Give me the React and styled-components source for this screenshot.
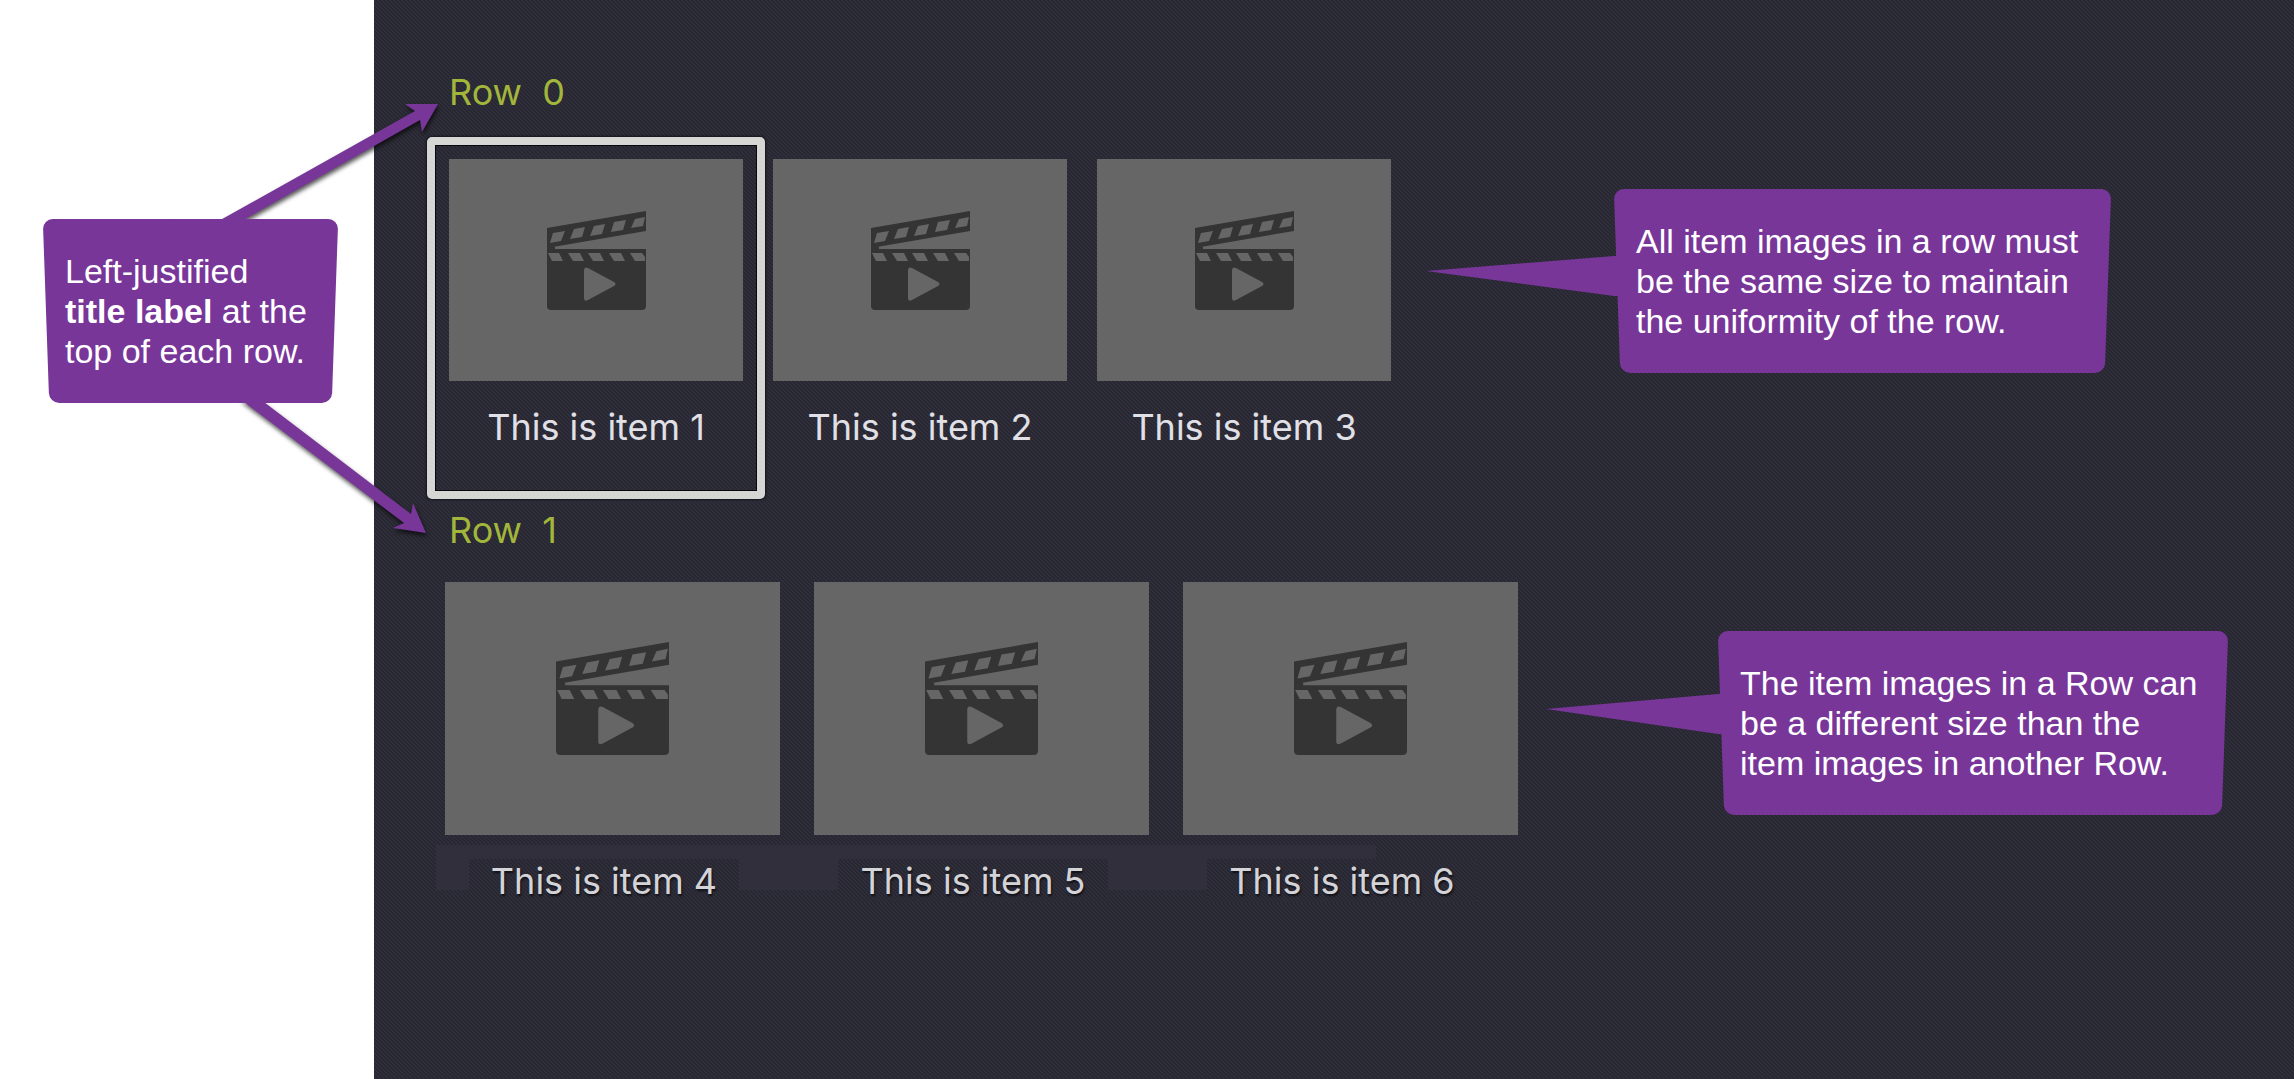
import React from "react";
import styled, { createGlobalStyle, css } from "styled-components";

const rows = [
  {
    title: "Row  0",
    items: ["This is item 1", "This is item 2", "This is item 3"],
    focused: 0,
    size: { width: 294, height: 222, icon: 99, gap: 30 },
    titleGap: 45,
    indent: 4,
    note: {
      text: "All item images in a row must\nbe the same size to maintain\nthe uniformity of the row.",
      width: 497,
      tail: 188,
      tailTop: 67,
      top: 30,
      left: 35,
    },
  },
  {
    title: "Row  1",
    items: ["This is item 4", "This is item 5", "This is item 6"],
    size: { width: 335, height: 253, icon: 113, gap: 34 },
    titleGap: 30,
    indent: 0,
    patched: true,
    note: {
      text: "The item images in a Row can\nbe a different size than the\nitem images in another Row.",
      width: 510,
      tail: 172,
      tailTop: 63,
      top: 49,
      left: 28,
    },
  },
];

const Clapper = ({ size }) => (
  <svg width={size} height={size} viewBox="0 0 99 99" aria-hidden="true">
    <path fill="#343434" d="M0 17 L99 0 V20 L0 37 Z" />
    <path fill="#343434" d="M0 34 L8 36 V40 H0 Z" />
    <path fill="#343434" d="M0 38 H99 V95 Q99 99 95 99 H4 Q0 99 0 95 Z" />
    <g fill="#666">
      <path d="M6 22 L18 20 L14 30 L3 32 Z" />
      <path d="M27 18 L38 16 L35 26 L23 28 Z" />
      <path d="M47 15 L58 13 L55 23 L43 25 Z" />
      <path d="M67 11 L79 9 L76 19 L64 21 Z" />
      <path d="M88 8 L98 6 L96 15 L84 17 Z" />
      <path d="M1 42 H12 L16 50 H5 Z" />
      <path d="M21 42 H33 L37 50 H26 Z" />
      <path d="M41 42 H53 L57 50 H46 Z" />
      <path d="M62 42 H74 L78 50 H67 Z" />
      <path d="M83 42 H95 L98 46 V50 H88 Z" />
      <path d="M37 60 Q37 55 41 57 L67 71 Q70 73 67 75 L41 89 Q37 91 37 87 Z" />
    </g>
  </svg>
);

const Callout = ({ width, children }) => (
  <Bubble $width={width}>
    <p>{children}</p>
  </Bubble>
);

const Row = ({ title, items, focused, size, titleGap, indent, patched, note }) => (
  <section>
    <RowTitle $gap={titleGap}>{title}</RowTitle>
    <Track $indent={indent}>
      <Items $gap={size.gap} $patched={patched}>
        {items.map((item, index) => (
          <Item key={item} $width={size.width}>
            <Poster $height={size.height}>
              <Clapper size={size.icon} />
            </Poster>
            <Caption $patched={patched}>{item}</Caption>
            {index === focused && <FocusFrame />}
          </Item>
        ))}
      </Items>
      <Note $top={note.top} $left={note.left}>
        <Tail $top={note.tailTop} width={note.tail} height="40" aria-hidden="true">
          <path d={`M0 15 L${note.tail} 0 h8 V40 h-8 Z`} />
        </Tail>
        <Callout width={note.width}>{note.text}</Callout>
      </Note>
    </Track>
  </section>
);

const App = () => {
  return (
    <>
      <GlobalStyle />
      <Page>
        <Aside>
          <Arrows width="374" height="600" aria-hidden="true">
            <path d="M215 223 L415 111 L405 104 H438 L422 132 L420 120 L238 223 Z" />
            <path d="M240 399 L404 523 L393 528 L426 533 L413 503 L411 514 L260 399 Z" />
          </Arrows>
          <Callout width={295}>
            Left-justified{"\n"}
            <strong>title label</strong> at the{"\n"}top of each row.
          </Callout>
        </Aside>
        <Screen>
          {rows.map((row) => (
            <Row key={row.title} {...row} />
          ))}
        </Screen>
      </Page>
    </>
  );
};

export default App;

const GlobalStyle = createGlobalStyle`
  * {
    box-sizing: border-box;
  }

  body {
    margin: 0;
    background: #fff;
  }

  h2, p, figure {
    margin: 0;
  }
`;

const weave = css`
  background-color: #2f2e3a;
  background-image: linear-gradient(
    45deg,
    rgba(0, 0, 0, 0.16) 25%,
    transparent 25% 50%,
    rgba(0, 0, 0, 0.16) 50% 75%,
    transparent 75%
  );
  background-size: 4px 4px;
`;

const Page = styled.main`
  display: flex;
  min-height: 100vh;
`;

const Aside = styled.aside`
  position: relative;
  z-index: 1;
  flex: 0 0 374px;
  padding: 219px 0 0 43px;
`;

const Screen = styled.div`
  flex: 1;
  display: flex;
  flex-direction: column;
  gap: 59px;
  padding: 70px 0 0 71px;
  ${weave}
`;

const Arrows = styled.svg`
  position: absolute;
  top: 0;
  left: 0;
  overflow: visible;
  fill: #783699;
  filter: drop-shadow(1px 3px 2px rgba(0, 0, 0, 0.65));
`;

const RowTitle = styled.h2`
  margin-bottom: ${({ $gap }) => $gap}px;
  padding-left: 4px;
  color: #a2b63b;
  font: 400 36px/44px Inter, sans-serif;
  white-space: pre;
`;

const Track = styled.div`
  display: flex;
  align-items: flex-start;
  padding-left: ${({ $indent }) => $indent}px;
`;

const Items = styled.div`
  position: relative;
  display: flex;
  gap: ${({ $gap }) => $gap}px;

  ${({ $patched }) =>
    $patched &&
    css`
      &::before {
        content: "";
        position: absolute;
        left: -9px;
        right: 142px;
        bottom: 13px;
        height: 45px;
        background: #302f3b;
      }
    `}
`;

const Item = styled.figure`
  position: relative;
  width: ${({ $width }) => $width}px;
`;

const Poster = styled.div`
  display: flex;
  align-items: center;
  justify-content: center;
  height: ${({ $height }) => $height}px;
  margin-bottom: 24px;
  padding-bottom: 20px;
  background: #666;
`;

const Caption = styled.figcaption`
  color: #e0e0e6;
  font: 400 36px/44px Inter, sans-serif;
  text-align: center;

  ${({ $patched }) =>
    $patched &&
    css`
      width: 270px;
      margin-left: 24px;
      color: #d4d4d8;
      text-shadow: 1px 2px 2px #111118;
      ${weave}
    `}
`;

const FocusFrame = styled.div`
  position: absolute;
  inset: -22px -22px -50px -22px;
  border: 8px solid #d6d7d5;
  border-radius: 5px;
  box-shadow: 0 0 2px 1px #15151c, inset 0 0 0 1px #08080c;
`;

const Note = styled.div`
  display: flex;
  align-items: flex-start;
  margin: ${({ $top, $left }) => `${$top}px 0 0 ${$left}px`};
`;

const Tail = styled.svg`
  flex: none;
  margin-top: ${({ $top }) => $top}px;
  overflow: visible;
  fill: #783699;
`;

const Bubble = styled.div`
  position: relative;
  flex: none;
  width: ${({ $width }) => $width}px;
  padding: 32px 0 32px 22px;
  color: #fff;
  font: 34px/40px "Liberation Sans", Arial, sans-serif;
  white-space: pre;

  p {
    position: relative;
    z-index: 1;
  }

  /* two halves leaning inwards make the tapered bubble */
  &::before,
  &::after {
    content: "";
    position: absolute;
    top: 0;
    bottom: 0;
    width: 60%;
    background: #783699;
    border-radius: 10px;
  }

  &::before {
    left: 3px;
    transform: skewX(2deg);
  }

  &::after {
    right: 3px;
    transform: skewX(-2deg);
  }
`;
